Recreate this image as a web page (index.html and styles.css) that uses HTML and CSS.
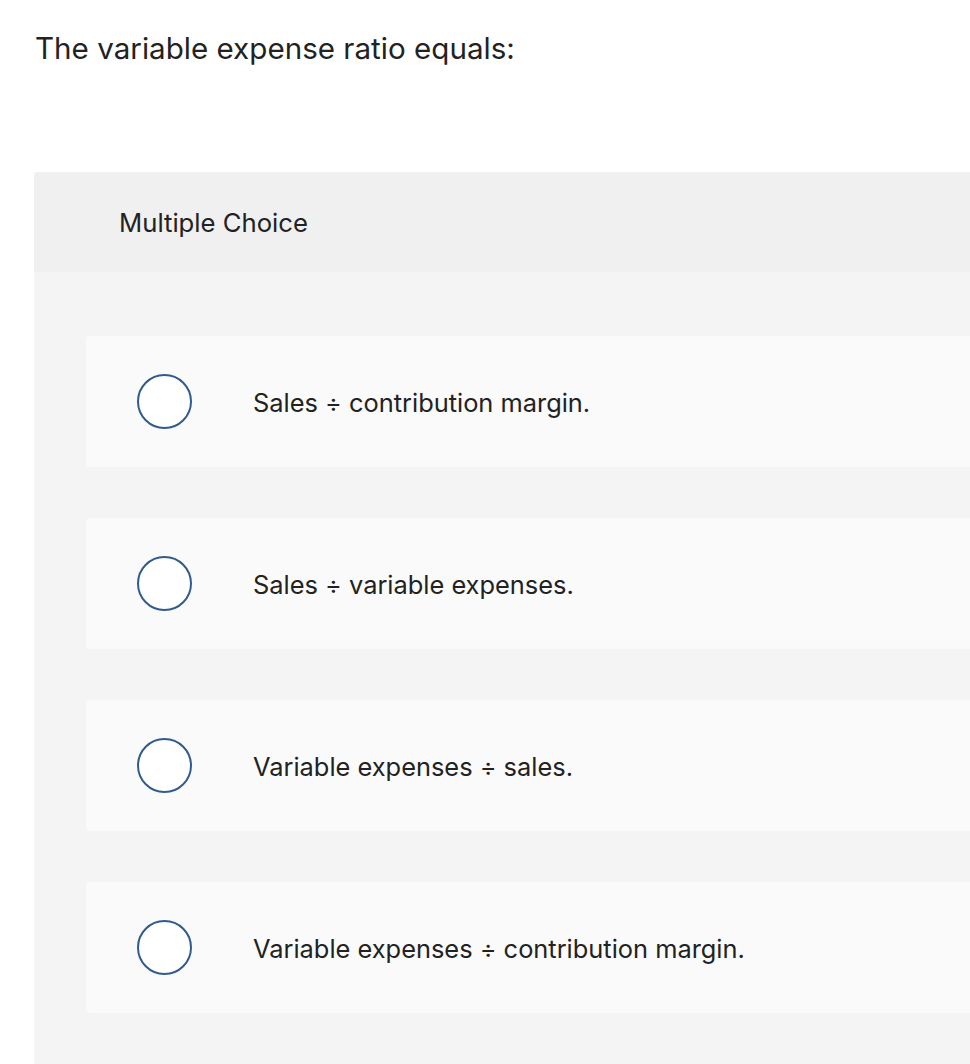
FILE: index.html
```html
<!DOCTYPE html>
<html lang="en">
<head>
<meta charset="utf-8">
<title>Multiple Choice</title>
<link rel="stylesheet" href="styles.css">
</head>
<body>
<main class="page">
  <h1 class="question">The variable expense ratio equals:</h1>
  <section class="panel">
    <div class="panel-header">Multiple Choice</div>
    <div class="options">
      <label class="option"><span class="radio"></span><span class="option-text">Sales ÷ contribution margin.</span></label>
      <label class="option"><span class="radio"></span><span class="option-text">Sales ÷ variable expenses.</span></label>
      <label class="option"><span class="radio"></span><span class="option-text">Variable expenses ÷ sales.</span></label>
      <label class="option"><span class="radio"></span><span class="option-text">Variable expenses ÷ contribution margin.</span></label>
    </div>
  </section>
</main>
</body>
</html>
```
FILE: styles.css
```css
html, body {
  margin: 0;
  padding: 0;
  background: #ffffff;
  overflow: hidden;
}
body {
  font-family: "Inter", "Lato", sans-serif;
  color: #222222;
  font-variant-ligatures: none;
}
.page {
  padding-top: 30px;
}
.question {
  margin: 0 0 0 35px;
  font-size: 29.6px;
  font-weight: 400;
  line-height: 36px;
  height: 36px;
}
.panel {
  margin: 106px 0 0 34px;
  background: #f4f4f4;
  border-radius: 4px 0 0 0;
  height: 900px;
}
.panel-header {
  height: 100px;
  display: flex;
  align-items: center;
  padding-left: 85px;
  background: #f0f0f0;
  border-radius: 4px 0 0 0;
  font-size: 25.7px;
}
.options {
  padding: 64px 0 0 52px;
  display: flex;
  flex-direction: column;
  gap: 51px;
}
.option {
  height: 131px;
  display: flex;
  align-items: center;
  padding-left: 51px;
  background: #fafafa;
  border-radius: 4px 0 0 4px;
}
.radio {
  box-sizing: border-box;
  width: 55px;
  height: 55px;
  border-radius: 50%;
  border: 2px solid #2f5b8e;
  background: #ffffff;
  flex: none;
}
.option-text {
  margin-left: 61px;
  font-size: 25.4px;
  padding-top: 2px;
}
```
